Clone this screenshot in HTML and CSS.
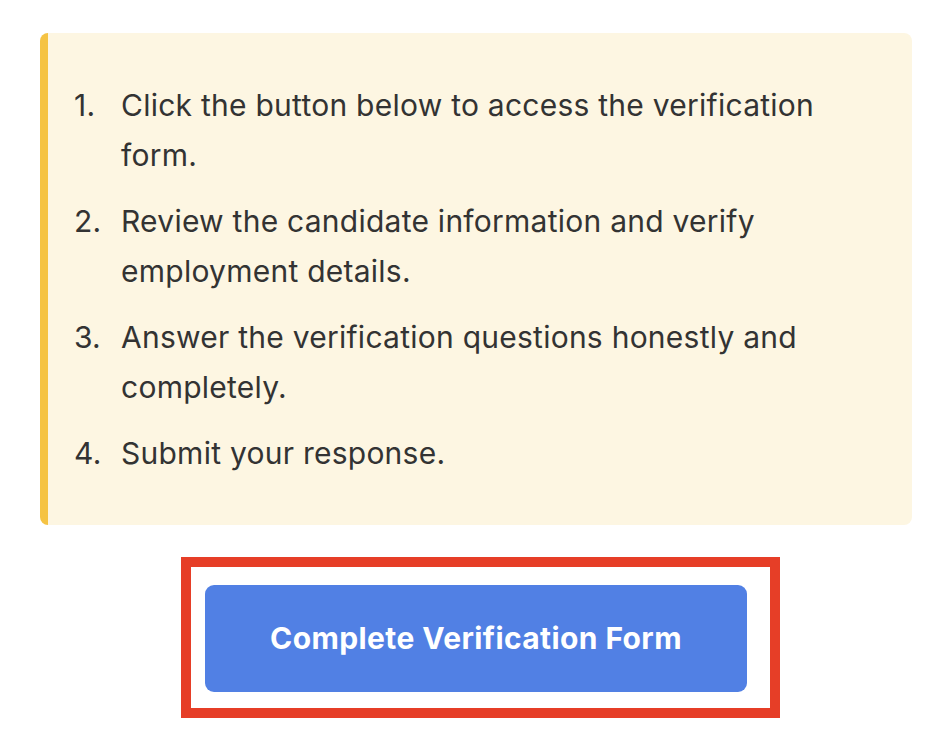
FILE: index.html
```html
<!DOCTYPE html>
<html lang="en">
<head>
    <meta charset="UTF-8">
    <meta name="viewport" content="width=device-width, initial-scale=1.0">
    <title>Employment Verification</title>
    <link rel="stylesheet" href="styles.css">
</head>
<body>
    <div class="instructions">
        <ol>
            <li>Click the button below to access the verification form.</li>
            <li>Review the candidate information and verify employment details.</li>
            <li>Answer the verification questions honestly and completely.</li>
            <li>Submit your response.</li>
        </ol>
    </div>

    <!-- Call to action -->
    <div class="action">
        <div class="highlight">
            <a href="#" class="verifyButton">Complete Verification Form</a>
        </div>
    </div>
</body>
</html>
```

FILE: styles.css
```css
body {
    font-family: 'Inter', 'Liberation Sans', Arial, sans-serif;
    color: #333333;
    background: #ffffff;
    margin: 0;
    padding: 33px 40px 0 40px;
}

.instructions {
    background-color: #fdf6e2;
    border-left: 8px solid #f5c343;
    border-radius: 8px;
    padding: 20px 20px;
}

.instructions ol {
    margin: 27px 0;
    padding: 0 40px 0 6px;
    list-style: none;
    counter-reset: step;
    font-size: 30px;
    letter-spacing: 0.25px;
    line-height: 50px;
}

.instructions li {
    counter-increment: step;
    display: grid;
    grid-template-columns: 47px 1fr;
    margin-bottom: 16px;
}

.instructions li::before {
    content: counter(step) ".";
}

.instructions li:last-child {
    margin-bottom: 0;
}

.action {
    display: flex;
    justify-content: center;
    margin-top: 32px;
    padding-left: 9px;
}

.highlight {
    border: 10px solid #e63e27;
    padding: 18px 23px 16px 14px;
}

.verifyButton {
    display: block;
    width: 542px;
    height: 107px;
    line-height: 107px;
    background-color: #5180e4;
    color: #ffffff;
    text-align: center;
    text-decoration: none;
    font-weight: 700;
    font-size: 30px;
    letter-spacing: 0.4px;
    border-radius: 9px;
}
```
